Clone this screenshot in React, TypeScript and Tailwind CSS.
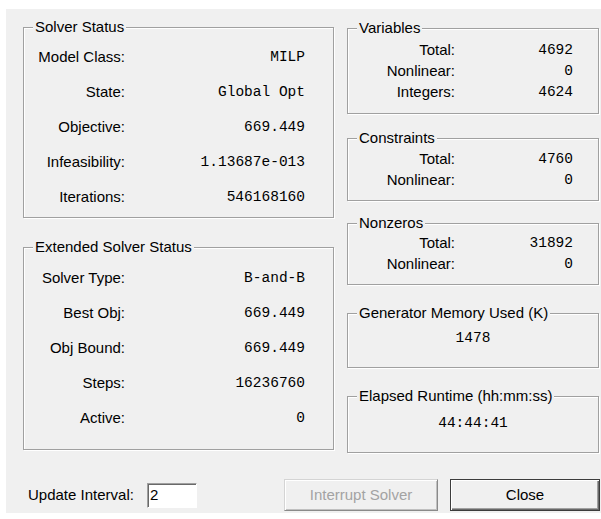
import React from 'react';

const sans = "font-['Liberation_Sans',Arial,sans-serif]";
const mono = "font-['Liberation_Mono','Courier_New',monospace]";

interface GroupBoxProps {
  title: string;
  className: string;
  children: React.ReactNode;
}

// Etched Win32 group box: dark line with a white highlight, caption sits on the top edge
const GroupBox: React.FC<GroupBoxProps> = ({ title, className, children }) => (
  <div
    className={`relative border border-[#a0a0a0] shadow-[inset_1px_1px_0_#ffffff,1px_1px_0_#ffffff] ${className}`}
  >
    <span className="absolute left-[9px] top-[-9px] h-[16px] bg-[#f0f0f0] px-[2px] text-[15px] leading-[16px] text-black">
      {title}
    </span>
    {children}
  </div>
);

interface StatRowProps {
  label: string;
  value: string;
  labelWidth: string;
  height: string;
}

const StatRow: React.FC<StatRowProps> = ({ label, value, labelWidth, height }) => (
  <div className={`flex items-center ${height}`}>
    <span className={`${labelWidth} shrink-0 text-right text-[15px] text-black`}>{label}</span>
    <span className={`flex-1 text-right ${mono} text-[14.5px] text-black`}>{value}</span>
  </div>
);

const solverStatus = [
  { label: 'Model Class:', value: 'MILP' },
  { label: 'State:', value: 'Global Opt' },
  { label: 'Objective:', value: '669.449' },
  { label: 'Infeasibility:', value: '1.13687e-013' },
  { label: 'Iterations:', value: '546168160' },
];

const extendedStatus = [
  { label: 'Solver Type:', value: 'B-and-B' },
  { label: 'Best Obj:', value: '669.449' },
  { label: 'Obj Bound:', value: '669.449' },
  { label: 'Steps:', value: '16236760' },
  { label: 'Active:', value: '0' },
];

const variables = [
  { label: 'Total:', value: '4692' },
  { label: 'Nonlinear:', value: '0' },
  { label: 'Integers:', value: '4624' },
];

const constraints = [
  { label: 'Total:', value: '4760' },
  { label: 'Nonlinear:', value: '0' },
];

const nonzeros = [
  { label: 'Total:', value: '31892' },
  { label: 'Nonlinear:', value: '0' },
];

export default function App() {
  return (
    <div className={`${sans} bg-white w-[601px] h-[519px] pt-[9px] pl-[6px]`}>
      <div className="flex h-[504px] w-[595px] flex-col bg-[#f0f0f0] pt-[18px]">
        <div className="flex items-start gap-[13px] pl-[17px]">
          {/* left column */}
          <div className="flex w-[311px] flex-col">
            <GroupBox title="Solver Status" className="h-[191px] pt-[12px] pr-[28px]">
              {solverStatus.map((r) => (
                <StatRow key={r.label} label={r.label} value={r.value} labelWidth="w-[101px]" height="h-[35px]" />
              ))}
            </GroupBox>
            <GroupBox title="Extended Solver Status" className="mt-[29px] h-[203px] pt-[13px] pr-[28px]">
              {extendedStatus.map((r) => (
                <StatRow key={r.label} label={r.label} value={r.value} labelWidth="w-[101px]" height="h-[35px]" />
              ))}
            </GroupBox>
          </div>

          {/* right column */}
          <div className="mt-[1px] flex w-[252px] flex-col">
            <GroupBox title="Variables" className="h-[86px] pt-[11px] pr-[25px]">
              {variables.map((r) => (
                <StatRow key={r.label} label={r.label} value={r.value} labelWidth="w-[107px]" height="h-[21px]" />
              ))}
            </GroupBox>
            <GroupBox title="Constraints" className="mt-[24px] h-[63px] pt-[10px] pr-[25px]">
              {constraints.map((r) => (
                <StatRow key={r.label} label={r.label} value={r.value} labelWidth="w-[107px]" height="h-[21px]" />
              ))}
            </GroupBox>
            <GroupBox title="Nonzeros" className="mt-[22px] h-[62px] pt-[9px] pr-[25px]">
              {nonzeros.map((r) => (
                <StatRow key={r.label} label={r.label} value={r.value} labelWidth="w-[107px]" height="h-[21px]" />
              ))}
            </GroupBox>
            <GroupBox title="Generator Memory Used (K)" className="mt-[28px] h-[55px] pt-[14px]">
              <div className={`flex h-[21px] items-center justify-center ${mono} text-[14.5px] text-black`}>1478</div>
            </GroupBox>
            <GroupBox title="Elapsed Runtime (hh:mm:ss)" className="mt-[28px] h-[57px] pt-[16px]">
              <div className={`flex h-[21px] items-center justify-center ${mono} text-[14.5px] text-black`}>44:44:41</div>
            </GroupBox>
          </div>
        </div>

        {/* footer: update interval and buttons */}
        <div className="mt-[26px] flex h-[32px] items-center pl-[22px]">
          <span className="w-[119px] text-[15px] text-black">Update Interval:</span>
          <div className="flex h-[25px] w-[50px] items-center border border-[#a0a0a0] border-b-white border-r-white bg-white pl-[2px] text-[15px] text-black shadow-[inset_1px_1px_0_#696969]">
            2
          </div>
          <button
            disabled
            className="ml-[87px] h-[32px] w-[154px] border border-[#d4d4d4] border-b-[#8a8a8a] border-r-[#8a8a8a] bg-[#f0f0f0] text-[15px] text-[#a3a3a3] shadow-[inset_1px_1px_0_#ffffff,inset_-1px_-1px_0_#c0c0c0]"
          >
            Interrupt Solver
          </button>
          <button className="ml-[12px] h-[32px] w-[150px] border border-[#3c3c3c] bg-[#f0f0f0] text-[15px] text-black shadow-[inset_1px_1px_0_#ffffff,inset_-1px_-1px_0_#696969,inset_-2px_-2px_0_#a0a0a0]">
            Close
          </button>
        </div>
      </div>
    </div>
  );
}
